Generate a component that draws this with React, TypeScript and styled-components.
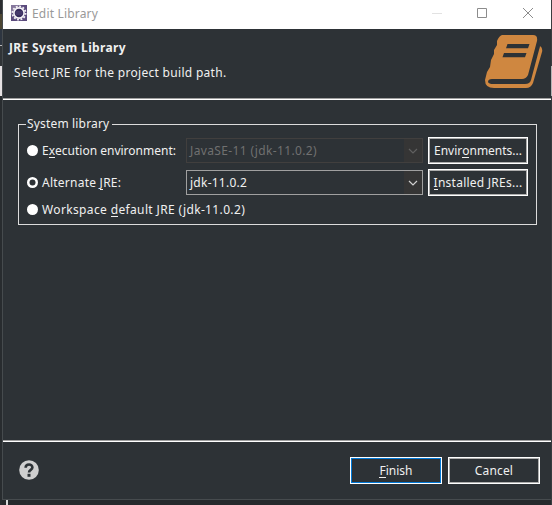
import React from "react";
import styled, { createGlobalStyle } from "styled-components";

const Global = createGlobalStyle`
  * { box-sizing: border-box; }
  body { margin: 0; background: #26292c; overflow: hidden; }
  u { text-decoration: none; box-shadow: 0 1px 0 currentColor; display: inline-block; line-height: 13px; }
`;

const Desktop = styled.div`
  width: 552px;
  height: 505px;
  display: grid;
  grid-template-columns: 2px 549px 1px;
  background: #26292c;
  overflow: hidden;
  font-family: "Noto Sans", sans-serif;
  font-size: 12px;
  color: #f0f0f0;
`;

const Strip = styled.div`
  display: flex;
  flex-direction: column;
`;

const Segment = styled.div<{ $h: number; $c: string }>`
  flex: none;
  height: ${(p) => p.$h}px;
  background: ${(p) => p.$c};
`;

const Column = styled.div`
  display: flex;
  flex-direction: column;
`;

const Dialog = styled.div`
  height: 500px;
  border: solid #464b4e;
  border-width: 0 0 1px 1px;
  background: #2d3236;
  display: flex;
  flex-direction: column;
`;

const Behind = styled.div`
  height: 5px;
  margin-left: 4px;
  border-left: 2px solid #d8d8d8;
`;

const Label = styled.span<{ $ls?: number }>`
  letter-spacing: ${(p) => p.$ls ?? 0}px;
  white-space: pre;
  line-height: 16px;
`;

const TitleBar = styled.div`
  height: 29px;
  background: #fff;
  color: #999;
  display: flex;
  align-items: center;
  padding: 0 18px 3px 8px;
`;

const TitleText = styled(Label)`
  margin: 1px 0 0 5px;
  flex: 1;
`;

const WindowControls = styled.div`
  display: flex;
  gap: 35px;

  & > :last-child {
    margin-left: 1px;
  }
`;

const Header = styled.div`
  height: 71px;
  border-bottom: 1px solid #fff;
  box-shadow: inset 0 -1px 0 #a0a0a0;
  display: flex;
  justify-content: space-between;
  padding: 5px 8px 0 6px;
`;

const HeaderText = styled.div`
  display: flex;
  flex-direction: column;
  padding-top: 6px;
  gap: 9px;
`;

const Heading = styled(Label)`
  font-weight: 700;
`;

const Description = styled(Label)`
  padding-left: 5px;
`;

const Body = styled.div`
  height: 342px;
  padding: 16px 14px 0 15px;
  border-bottom: 1px solid #fff;
  box-shadow: inset 0 -1px 0 #a0a0a0;
`;

const Group = styled.fieldset`
  margin: 0;
  height: 109px;
  border: 1px solid #dcdcdc;
  border-radius: 0;
  padding: 3px 7px 0 8px;
`;

const Legend = styled.legend`
  padding: 0 3px 0 1px;
  height: 16px;
  line-height: 16px;
  display: block;
  margin-left: -1px;
`;

const Row = styled.div<{ $h: number }>`
  display: flex;
  align-items: center;
  height: ${(p) => p.$h}px;
`;

const FieldRow = styled(Row)`
  padding-bottom: 1px;
`;

const Choice = styled.div<{ $w?: number }>`
  width: ${(p) => (p.$w ? `${p.$w}px` : "auto")};
  display: flex;
  align-items: center;
  gap: 4px;
`;

const RadioIcon = styled.svg`
  flex: none;
  margin-top: -1px;
`;

const Radio = ({ on }: { on?: boolean }) => (
  <RadioIcon width="11" height="11" viewBox="0 0 11 11">
    <circle cx="5.5" cy="5.5" r="5.5" fill="#fff" />
    {on && <circle cx="5.5" cy="5.5" r="3" fill="#2d3236" />}
  </RadioIcon>
);

const Select = styled.div<{ $disabled?: boolean }>`
  width: 237px;
  height: 25px;
  border: 1px solid ${(p) => (p.$disabled ? "#413f3e" : "#a0a0a0")};
  color: ${(p) => (p.$disabled ? "#707070" : "#f0f0f0")};
  display: flex;
  justify-content: space-between;
  align-items: center;
  padding-left: 3px;
`;

const Arrow = styled.div<{ $disabled?: boolean }>`
  width: 18px;
  height: 23px;
  background: #353535;
  color: ${(p) => (p.$disabled ? "#606060" : "#d0d0d0")};
  display: flex;
  align-items: center;
  justify-content: center;
`;

const Button = styled.div<{ $w: number; $primary?: boolean }>`
  width: ${(p) => p.$w}px;
  height: 27px;
  border: 1px solid #fff;
  box-shadow: inset 0 0 0 1px ${(p) => (p.$primary ? "#0078d7" : "#adadad")};
  display: flex;
  align-items: center;
  justify-content: center;
`;

const SideButton = styled(Button)`
  margin-left: 5px;
`;

const Footer = styled.div`
  flex: 1;
  display: flex;
  align-items: center;
  padding: 0 11px 0 16px;
`;

const HelpIcon = styled.svg`
  margin-top: -2px;
`;

const Actions = styled.div`
  margin-left: auto;
  display: flex;
  gap: 6px;
`;

const Gear = () => (
  <svg width="16" height="16" viewBox="0 0 16 16">
    <rect width="16" height="16" fill="#5a4a7c" />
    <path d="M0 0h9L0 10z" fill="#85779c" />
    <circle cx="8" cy="8" r="6.6" fill="none" stroke="#f3f1f6" strokeWidth="1.8" strokeDasharray="1.9 1.555" />
    <circle cx="8" cy="8" r="5.1" fill="#372c5c" stroke="#f6f4f8" strokeWidth="1.6" />
    <path d="M4.5 7h7M4.5 9h7" stroke="#5d5083" strokeWidth=".8" />
  </svg>
);

const Book = () => (
  <svg width="58" height="55" viewBox="0 0 58 55">
    <path
      fill="#cf8740"
      fillRule="evenodd"
      d="M17 1H48Q53 1 52 7L43 41Q41 45 37 45H7Q3 45 3 48Q4 50 8 50H40Q45 50 46 46L54 16Q55 13 55 12Q58 14 57 18L48 49Q46 54 41 54H9Q0 54 0 46L2 38L5 33L6 26L9 20V16L12 11V7Q14 2 17 1ZM22.5 10L21 14.3H43L44.5 10ZM19 19L17.5 23.3H40L41.5 19Z"
    />
  </svg>
);

const Chevron = () => (
  <svg width="10" height="6" viewBox="0 0 10 6">
    <path d="M1 1l4 4 4-4" fill="none" stroke="currentColor" strokeWidth="1.2" />
  </svg>
);

const Help = () => (
  <HelpIcon width="20" height="20" viewBox="0 0 20 20">
    <circle cx="10" cy="10" r="9.8" fill="#cfcfcf" />
    <path d="M6.6 7.7C6.7 3.5 13.4 3.5 13.4 7.5C13.4 10 10 9.8 10 12.5" fill="none" stroke="#2d3236" strokeWidth="2.6" />
    <path d="M8.5 13.8h3v3h-3z" fill="#2d3236" />
  </HelpIcon>
);

export default function App() {
  return (
    <>
      <Global />
      <Desktop>
        <Strip>
          <Segment $h={14} $c="#2b2d30" />
          <Segment $h={15} $c="#4c4633" />
          <Segment $h={16} $c="#2d3540" />
          <Segment $h={1} $c="#bbb" />
          <Segment $h={20} $c="#303437" />
          <Segment $h={30} $c="#e6e2e4" />
          <Segment $h={409} $c="#282c2f" />
        </Strip>
        <Column>
          <Dialog>
            <TitleBar>
              <Gear />
              <TitleText $ls={0.18}>Edit Library</TitleText>
              <WindowControls>
                <svg width="10" height="10"><path d="M0 5.5h10" stroke="#e2e2e2" /></svg>
                <svg width="10" height="10"><path d="M.5.5h9v9h-9z" fill="none" stroke="#8c8c8c" /></svg>
                <svg width="10" height="10"><path d="M0 0l10 10M10 0L0 10" stroke="#8c8c8c" /></svg>
              </WindowControls>
            </TitleBar>
            <Header>
              <HeaderText>
                <Heading $ls={0.34}>JRE System Library</Heading>
                <Description $ls={0.3}>Select JRE for the project build path.</Description>
              </HeaderText>
              <Book />
            </Header>
            <Body>
              <Group>
                <Legend><Label $ls={0.17}>System library</Label></Legend>
                <FieldRow $h={32}>
                  <Choice $w={159}><Radio /><Label>E<u>x</u>ecution environment:</Label></Choice>
                  <Select $disabled><Label $ls={0.36}>JavaSE-11 (jdk-11.0.2)</Label><Arrow $disabled><Chevron /></Arrow></Select>
                  <SideButton $w={100}><Label>Envir<u>o</u>nments...</Label></SideButton>
                </FieldRow>
                <FieldRow $h={32}>
                  <Choice $w={159}><Radio on /><Label $ls={0.24}>Alternate <u>J</u>RE:</Label></Choice>
                  <Select><Label $ls={0.25}>jdk-11.0.2</Label><Arrow><Chevron /></Arrow></Select>
                  <SideButton $w={100}><Label $ls={0.25}><u>I</u>nstalled JREs...</Label></SideButton>
                </FieldRow>
                <Row $h={22}>
                  <Choice><Radio /><Label $ls={0.36}>Workspace <u>d</u>efault JRE (jdk-11.0.2)</Label></Choice>
                </Row>
              </Group>
            </Body>
            <Footer>
              <Help />
              <Actions>
                <Button $w={92} $primary><Label><u>F</u>inish</Label></Button>
                <Button $w={92}><Label $ls={0.15}>Cancel</Label></Button>
              </Actions>
            </Footer>
          </Dialog>
          <Behind />
        </Column>
        <Strip>
          <Segment $h={66} $c="#3a3d40" />
          <Segment $h={30} $c="#b4b4b4" />
          <Segment $h={409} $c="#383c3f" />
        </Strip>
      </Desktop>
    </>
  );
}
